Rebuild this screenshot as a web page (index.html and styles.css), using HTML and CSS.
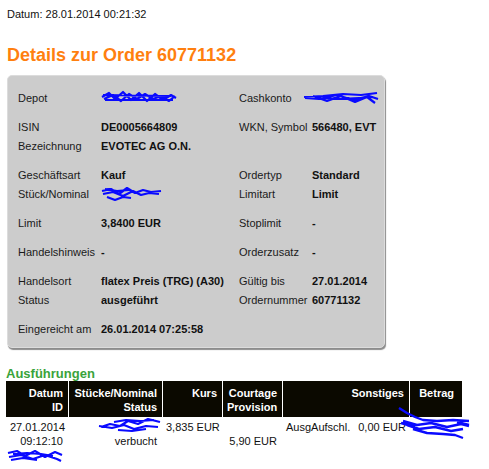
FILE: index.html
```html
<!DOCTYPE html>
<html lang="de">
<head>
<meta charset="utf-8">
<title>Details zur Order 60771132</title>
<link rel="stylesheet" href="styles.css">
</head>
<body>
<div class="page">
  <div class="date">Datum: 28.01.2014 00:21:32</div>
  <h1 class="title">Details zur Order 60771132</h1>

  <div class="card">
    <div class="group">
      <div class="lbl">Depot</div>
      <div class="val"><svg class="scribble" width="76" height="15" viewBox="0 0 76 15"><path d="M1 7 L8 3 L14 9 L22 2 L30 10 L38 3 L46 11 L54 4 L62 10 L70 5 L75 8 M3 9 L12 5 L20 11 L28 4 L36 9 L44 4 L52 9 L60 6 L68 11 L74 6 M2 5 L70 6 M4 10 L72 10" fill="none" stroke="#0a0aff" stroke-width="2.2" stroke-linejoin="round"/></svg></div>
      <div class="lbl">Cashkonto</div>
      <div class="val"><svg class="scribble shift" width="76" height="16" viewBox="0 0 76 16"><path d="M1 7 L20 6 L40 4 L58 5 L74 3 M2 8 L16 9 L34 5 L50 10 L66 6 L75 9 M10 6 L24 11 L38 6 L52 12 L64 7 L72 13 M20 8 L36 9 L56 8 L70 7" fill="none" stroke="#0a0aff" stroke-width="2.2" stroke-linejoin="round"/></svg></div>
    </div>

    <div class="group">
      <div class="lbl">ISIN</div>
      <div class="val">DE0005664809</div>
      <div class="lbl">WKN, Symbol</div>
      <div class="val">566480, EVT</div>
      <div class="lbl">Bezeichnung</div>
      <div class="val">EVOTEC AG O.N.</div>
      <div class="lbl"></div>
      <div class="val"></div>
    </div>

    <div class="group">
      <div class="lbl">Geschäftsart</div>
      <div class="val">Kauf</div>
      <div class="lbl">Ordertyp</div>
      <div class="val">Standard</div>
      <div class="lbl">Stück/Nominal</div>
      <div class="val"><svg class="scribble" width="62" height="18" viewBox="0 0 62 18"><path d="M1 6 L10 4 L18 9 L26 3 L34 8 L42 5 L50 7 L60 6 M2 9 L12 7 L22 11 L32 6 L40 10 L48 8 L58 9 M6 12 L14 15 L22 12 L30 13 M4 4 L16 6 L28 5" fill="none" stroke="#0a0aff" stroke-width="2.2" stroke-linejoin="round"/></svg></div>
      <div class="lbl">Limitart</div>
      <div class="val">Limit</div>
    </div>

    <div class="group">
      <div class="lbl">Limit</div>
      <div class="val">3,8400 EUR</div>
      <div class="lbl">Stoplimit</div>
      <div class="val">-</div>
    </div>

    <div class="group">
      <div class="lbl">Handelshinweis</div>
      <div class="val">-</div>
      <div class="lbl">Orderzusatz</div>
      <div class="val">-</div>
    </div>

    <div class="group">
      <div class="lbl">Handelsort</div>
      <div class="val">flatex Preis (TRG) (A30)</div>
      <div class="lbl">Gültig bis</div>
      <div class="val">27.01.2014</div>
      <div class="lbl">Status</div>
      <div class="val">ausgeführt</div>
      <div class="lbl">Ordernummer</div>
      <div class="val">60771132</div>
    </div>

    <div class="group">
      <div class="lbl">Eingereicht am</div>
      <div class="val">26.01.2014 07:25:58</div>
      <div class="lbl"></div>
      <div class="val"></div>
    </div>
  </div>

  <h2 class="sub">Ausführungen</h2>

  <table class="exec">
    <colgroup>
      <col class="c1"><col class="c2"><col class="c3"><col class="c4"><col class="c5"><col class="c6">
    </colgroup>
    <thead>
      <tr>
        <th>Datum<br>ID</th>
        <th>Stücke/Nominal<br>Status</th>
        <th>Kurs</th>
        <th>Courtage<br>Provision</th>
        <th>Sonstiges</th>
        <th class="last">Betrag</th>
      </tr>
    </thead>
    <tbody>
      <tr>
        <td>27.01.2014<br>09:12:10<br><span class="idline"><svg class="scribble" width="56" height="15" viewBox="0 0 56 15"><path d="M1 5 L10 3 L18 8 L28 3 L38 9 L48 4 L55 7 M2 9 L14 7 L26 11 L38 7 L50 11 L54 13 M6 6 L20 5 L34 6 L46 8 M4 12 L16 10 L30 12" fill="none" stroke="#0a0aff" stroke-width="2.2" stroke-linejoin="round"/></svg></span></td>
        <td><span class="redline"><svg class="scribble" width="64" height="18" viewBox="0 0 64 18"><path d="M3 11 L12 8 L22 10 L30 5 L40 8 L50 3 L62 6 M1 10 L14 12 L26 9 L36 13 L48 10 L60 11 M16 6 L28 4 L42 5 L56 4 M20 14 L34 15 L48 13" fill="none" stroke="#0a0aff" stroke-width="2.2" stroke-linejoin="round"/></svg></span><br>verbucht</td>
        <td>3,835 EUR</td>
        <td><br>5,90 EUR</td>
        <td>AusgAufschl.<span class="gap"></span>0,00 EUR</td>
        <td class="betrag"><svg class="scribble over" width="74" height="34" viewBox="0 0 74 34"><path d="M2 1 L10 6 L18 10 L26 13 L40 14 L56 13 L72 14 M6 14 L20 18 L34 16 L50 20 L64 17 L72 19 M10 18 L22 22 L38 20 L54 24 L66 22 M16 22 L30 26 L46 27 L58 28 L66 31 M4 16 L18 20 M60 15 L72 18" fill="none" stroke="#0a0aff" stroke-width="2.4" stroke-linejoin="round"/></svg></td>
      </tr>
    </tbody>
  </table>
</div>
</body>
</html>
```

FILE: styles.css
```css
html, body {
  margin: 0;
  padding: 0;
  background: #ffffff;
}

.page {
  padding: 8px 0 0 7px;
  font-family: "Liberation Sans", Arial, sans-serif;
  font-size: 11px;
  color: #111111;
}

.date {
  line-height: 13px;
}

.title {
  margin: 24px 0 0 0;
  font-family: "Liberation Sans", Arial, sans-serif;
  font-size: 18px;
  line-height: 21px;
  font-weight: bold;
  color: #ff7f0f;
}

.card {
  margin-top: 9px;
  width: 356px;
  padding: 12px 10px 9px 10px;
  background: #cccccc;
  border: 1px solid #dcdcdc;
  border-radius: 5px;
  box-shadow: 1px 2px 1px #8c8c8c;
  display: flex;
  flex-direction: column;
  gap: 10px;
}

.group {
  display: grid;
  grid-template-columns: 83px 138px 73px 1fr;
  grid-auto-rows: 19px;
  align-items: center;
}

.lbl {
  color: #1a1a1a;
  white-space: nowrap;
}

.val {
  font-weight: bold;
  color: #111111;
  white-space: nowrap;
}

.scribble {
  display: block;
}

.scribble.shift {
  margin-left: -9px;
}

.sub {
  margin: 18px 0 0 -1px;
  font-size: 13px;
  line-height: 15px;
  font-weight: bold;
  color: #3aa33a;
}

.exec {
  margin-left: -1px;
  border-collapse: separate;
  border-spacing: 0;
  table-layout: fixed;
  width: 456px;
}

.c1 { width: 62px; }
.c2 { width: 94px; }
.c3 { width: 60px; }
.c4 { width: 60px; }
.c5 { width: 127px; }
.c6 { width: 53px; }

.exec th {
  background: #0b0900;
  color: #ffffff;
  font-weight: bold;
  text-align: right;
  vertical-align: top;
  line-height: 14px;
  padding: 5px 5px 3px 4px;
  height: 28px;
  white-space: nowrap;
}

.exec th + th {
  border-left: 1px solid #ffffff;
}

.exec th.last {
  padding-right: 8px;
}

.exec td {
  text-align: right;
  vertical-align: top;
  line-height: 14px;
  padding: 3px 5px 0 4px;
  white-space: nowrap;
  color: #111111;
}

.exec td.betrag {
  position: relative;
}

.idline {
  display: inline-block;
  vertical-align: top;
  margin-left: -6px;
}

.redline {
  display: inline-block;
  vertical-align: top;
  margin-top: -4px;
  margin-right: -5px;
}

.gap {
  display: inline-block;
  width: 8px;
}

.scribble.over {
  position: absolute;
  left: -12px;
  top: -10px;
}
```
